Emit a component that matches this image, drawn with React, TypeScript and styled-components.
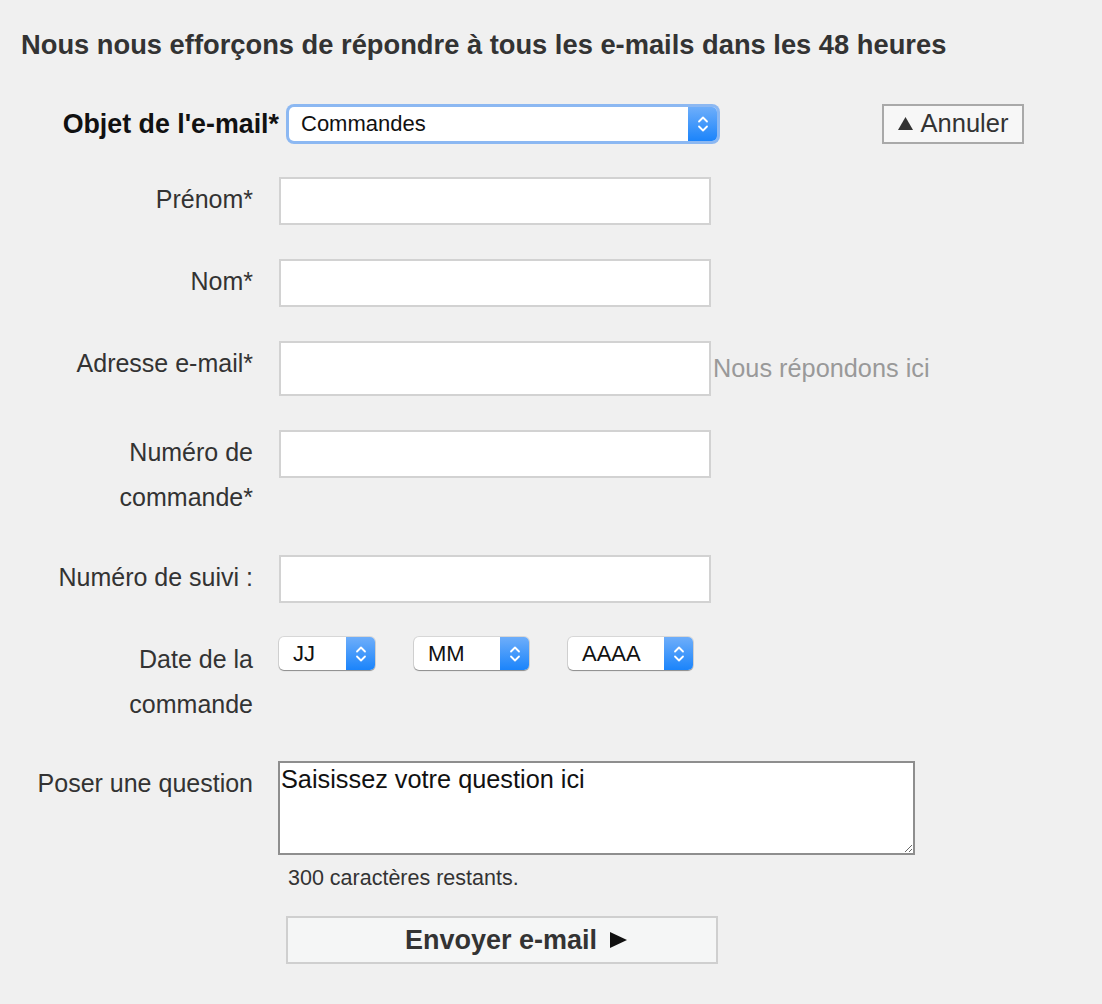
import React from "react";
import styled, { createGlobalStyle } from "styled-components";

const Global = createGlobalStyle`
  html, body { margin: 0; padding: 0; background: #f0f0f0; }
  body { font-family: "Liberation Sans", Arial, Helvetica, sans-serif; color: #333; }
`;

const Page = styled.div`
  width: 1102px;
  min-height: 1004px;
  box-sizing: border-box;
  padding-top: 30px;
  background: #f0f0f0;
`;

const Heading = styled.h1`
  margin: 0 0 0 21px;
  font-size: 27.3px;
  line-height: 30px;
  font-weight: bold;
  color: #333;
  white-space: nowrap;
`;

const TopRow = styled.div`
  display: flex;
  align-items: center;
  height: 40px;
  margin-top: 44px;
`;

const TopLabel = styled.div`
  width: 279px;
  text-align: right;
  font-size: 26.8px;
  font-weight: bold;
  color: #111;
  white-space: nowrap;
`;

const SelectSlot = styled.div`
  margin-left: 10px;
`;

const CancelButton = styled.button`
  margin-left: 165px;
  width: 142px;
  height: 40px;
  box-sizing: border-box;
  border: 2px solid #a9a9a9;
  background: #f7f7f7;
  font-family: inherit;
  font-size: 25.5px;
  color: #333;
  display: flex;
  align-items: center;
  justify-content: center;
  gap: 8px;
  padding: 0 0 2px;
`;

const Form = styled.div`
  margin-top: 33px;
`;

const Row = styled.div<{ $gap?: number }>`
  display: grid;
  grid-template-columns: 253px 1fr;
  column-gap: 26px;
  align-items: start;
  margin-bottom: ${(p) => (p.$gap ?? 34)}px;
`;

const Label = styled.div`
  text-align: right;
  font-size: 25px;
  line-height: 45px;
  color: #333;
`;

const Field = styled.div`
  display: flex;
  align-items: center;
`;

const Column = styled.div`
  display: flex;
  flex-direction: column;
  align-items: flex-start;
`;

const TextInput = styled.div<{ $h?: number }>`
  width: 432px;
  height: ${(p) => p.$h ?? 48}px;
  box-sizing: border-box;
  border: 2px solid #d2d2d2;
  background: #fff;
`;

const Hint = styled.span`
  margin-left: 2px;
  font-size: 25.3px;
  color: #999;
`;

const SelectBox = styled.div<{ $w: number; $focus?: boolean }>`
  width: ${(p) => p.$w}px;
  height: ${(p) => (p.$focus ? 34 : 33)}px;
  box-sizing: border-box;
  display: flex;
  align-items: stretch;
  background: #fff;
  border-radius: 5px;
  box-shadow: ${(p) =>
    p.$focus
      ? "0 0 0 3px #8cb8f2, 0 0 0 1px #6da6f0"
      : "0 1px 1px rgba(0,0,0,0.35), 0 0 0 1px rgba(0,0,0,0.1)"};
`;

const SelectText = styled.span<{ $pad: number }>`
  flex: 1;
  display: flex;
  align-items: center;
  padding-left: ${(p) => p.$pad}px;
  font-size: 22px;
  color: #111;
`;

const Stepper = styled.span`
  width: 29px;
  display: flex;
  align-items: center;
  justify-content: center;
  border-radius: 0 5px 5px 0;
  background: linear-gradient(#6eaefa, #1b84fb);
`;

const DateRow = styled.div`
  display: flex;
  gap: 39px;
`;

const TextArea = styled.textarea`
  width: 637px;
  height: 94px;
  box-sizing: border-box;
  margin: 0 0 0 -1px;
  border: 2px solid #8e8e8e;
  padding: 1px 1px;
  font-family: inherit;
  font-size: 25.3px;
  line-height: 30px;
  color: #111;
  background: #fff;
  resize: both;
  outline: none;
`;

const Counter = styled.div`
  margin: 11px 0 0 9px;
  font-size: 21.5px;
  line-height: 24px;
  color: #333;
`;

const SendButton = styled.button`
  margin: 26px 0 0 7px;
  width: 432px;
  height: 48px;
  box-sizing: border-box;
  border: 2px solid #cfcfcf;
  background: #f5f6f6;
  font-family: inherit;
  font-size: 27px;
  font-weight: bold;
  color: #333;
  display: flex;
  align-items: center;
  justify-content: center;
  gap: 13px;
  padding: 0 0 0 28px;
`;

const Chevrons = () => (
  <svg width="12" height="20" viewBox="0 0 12 20" fill="none">
    <path d="M2 7.5 L6 3.5 L10 7.5" stroke="#fff" strokeWidth="1.8" strokeLinecap="round" strokeLinejoin="round" />
    <path d="M2 12.5 L6 16.5 L10 12.5" stroke="#fff" strokeWidth="1.8" strokeLinecap="round" strokeLinejoin="round" />
  </svg>
);

const Select = ({ w, text, pad, focus }: { w: number; text: string; pad: number; focus?: boolean }) => (
  <SelectBox $w={w} $focus={focus}>
    <SelectText $pad={pad}>{text}</SelectText>
    <Stepper>
      <Chevrons />
    </Stepper>
  </SelectBox>
);

const UpTriangle = () => (
  <svg width="15" height="13" viewBox="0 0 15 13">
    <path d="M7.5 0 L15 13 L0 13 Z" fill="#333" />
  </svg>
);

const RightTriangle = () => (
  <svg width="17" height="16" viewBox="0 0 17 16">
    <path d="M0 0 L17 8 L0 16 Z" fill="#111" />
  </svg>
);

export default function App() {
  return (
    <Page>
      <Global />
      <Heading>Nous nous efforçons de répondre à tous les e-mails dans les 48 heures</Heading>
      <TopRow>
        <TopLabel>Objet de l'e-mail*</TopLabel>
        <SelectSlot>
          <Select w={428} text="Commandes" pad={12} focus />
        </SelectSlot>
        <CancelButton type="button">
          <UpTriangle />
          Annuler
        </CancelButton>
      </TopRow>
      <Form>
        <Row>
          <Label>Prénom*</Label>
          <Field>
            <TextInput />
          </Field>
        </Row>
        <Row>
          <Label>Nom*</Label>
          <Field>
            <TextInput />
          </Field>
        </Row>
        <Row>
          <Label>Adresse e-mail*</Label>
          <Field>
            <TextInput $h={55} />
            <Hint>Nous répondons ici</Hint>
          </Field>
        </Row>
        <Row $gap={35}>
          <Label>
            Numéro de
            <br />
            commande*
          </Label>
          <Field>
            <TextInput />
          </Field>
        </Row>
        <Row>
          <Label>Numéro de suivi :</Label>
          <Field>
            <TextInput />
          </Field>
        </Row>
        <Row $gap={34}>
          <Label>
            Date de la
            <br />
            commande
          </Label>
          <DateRow>
            <Select w={96} text="JJ" pad={14} />
            <Select w={115} text="MM" pad={14} />
            <Select w={125} text="AAAA" pad={14} />
          </DateRow>
        </Row>
        <Row $gap={0}>
          <Label>Poser une question</Label>
          <Column>
            <TextArea defaultValue="Saisissez votre question ici" />
            <Counter>300 caractères restants.</Counter>
            <SendButton type="button">
              Envoyer e-mail
              <RightTriangle />
            </SendButton>
          </Column>
        </Row>
      </Form>
    </Page>
  );
}
